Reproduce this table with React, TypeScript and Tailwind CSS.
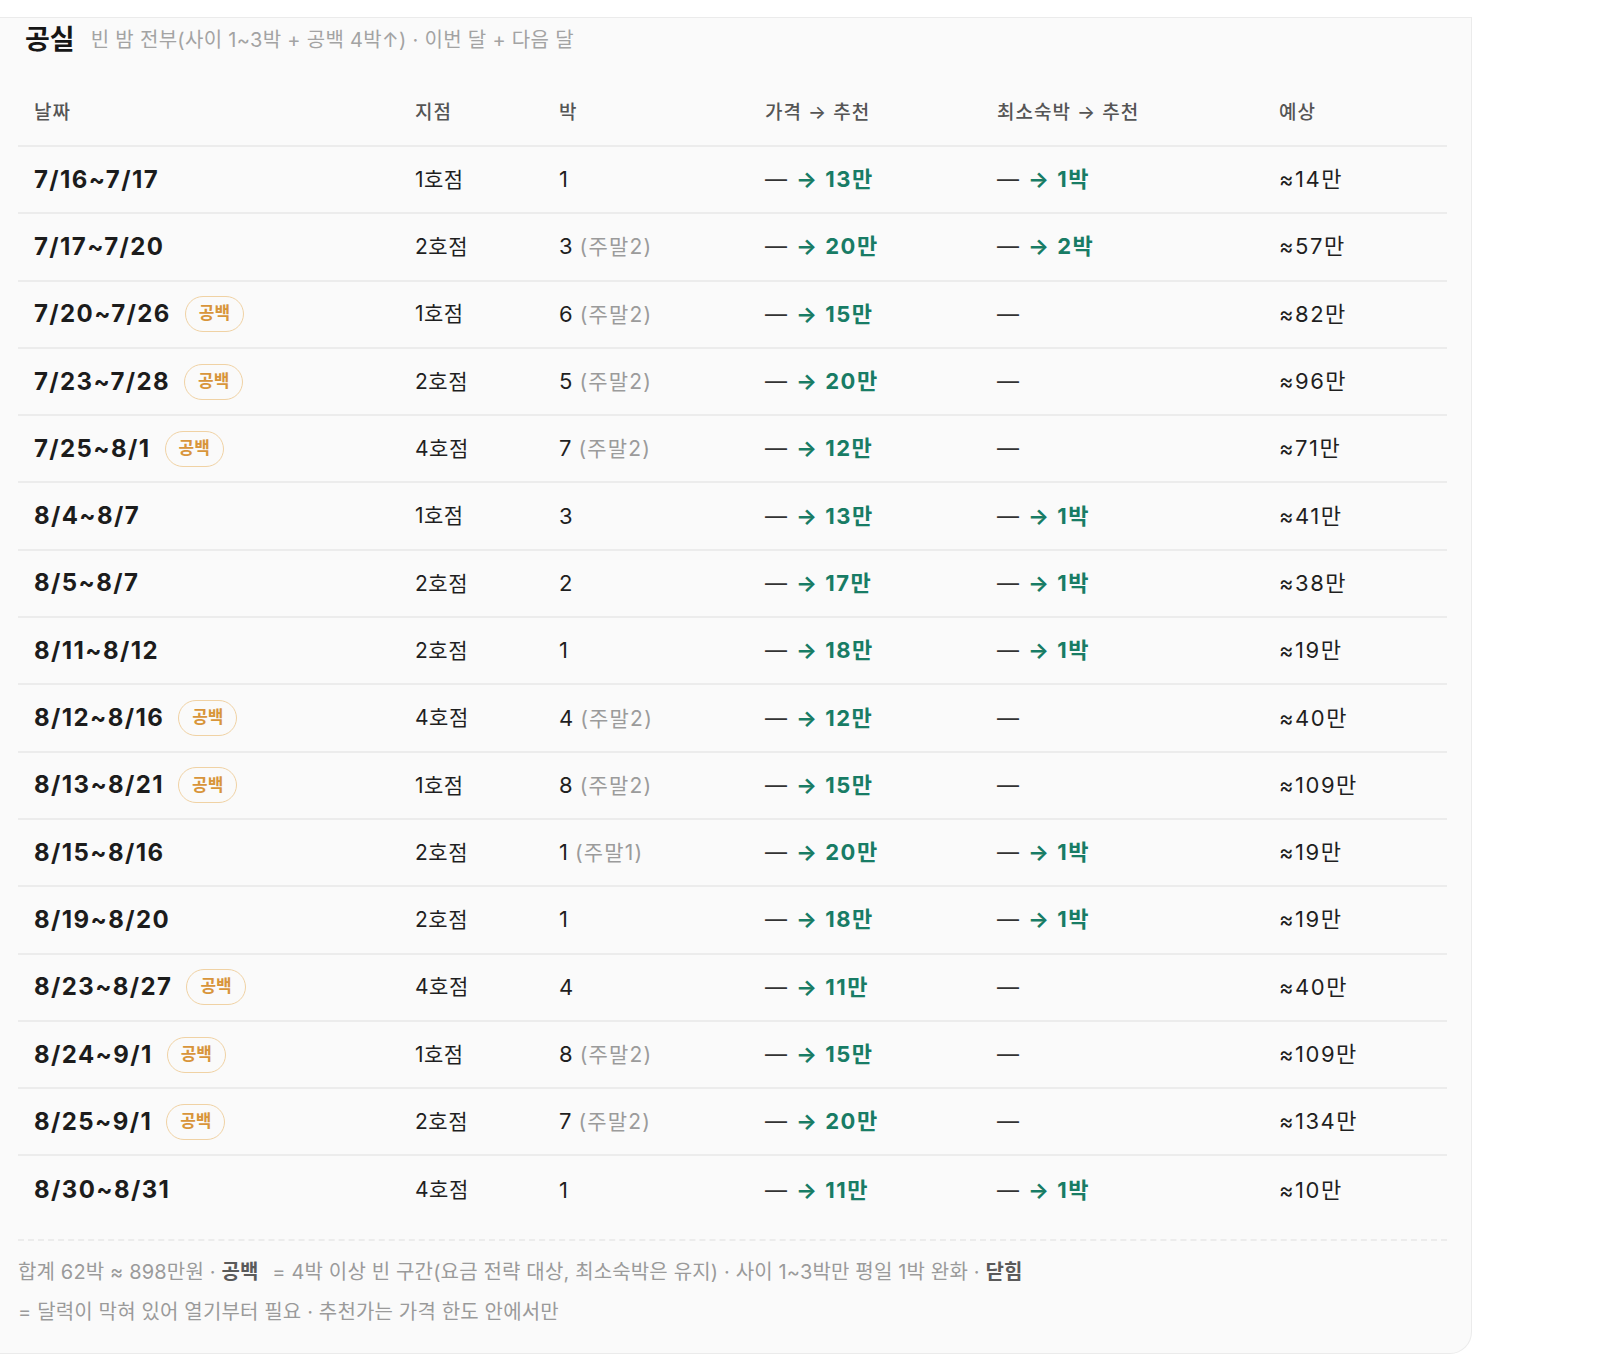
import React from 'react';

type Row = {
  date: string;
  gap?: boolean;
  branch: string;
  nights: string;
  weekend?: string;
  price: string;
  minStay?: string;
  est: string;
};

const rows: Row[] = [
  { date: '7/16~7/17', branch: '1호점', nights: '1', price: '13만', minStay: '1박', est: '≈14만' },
  { date: '7/17~7/20', branch: '2호점', nights: '3', weekend: '(주말2)', price: '20만', minStay: '2박', est: '≈57만' },
  { date: '7/20~7/26', gap: true, branch: '1호점', nights: '6', weekend: '(주말2)', price: '15만', est: '≈82만' },
  { date: '7/23~7/28', gap: true, branch: '2호점', nights: '5', weekend: '(주말2)', price: '20만', est: '≈96만' },
  { date: '7/25~8/1', gap: true, branch: '4호점', nights: '7', weekend: '(주말2)', price: '12만', est: '≈71만' },
  { date: '8/4~8/7', branch: '1호점', nights: '3', price: '13만', minStay: '1박', est: '≈41만' },
  { date: '8/5~8/7', branch: '2호점', nights: '2', price: '17만', minStay: '1박', est: '≈38만' },
  { date: '8/11~8/12', branch: '2호점', nights: '1', price: '18만', minStay: '1박', est: '≈19만' },
  { date: '8/12~8/16', gap: true, branch: '4호점', nights: '4', weekend: '(주말2)', price: '12만', est: '≈40만' },
  { date: '8/13~8/21', gap: true, branch: '1호점', nights: '8', weekend: '(주말2)', price: '15만', est: '≈109만' },
  { date: '8/15~8/16', branch: '2호점', nights: '1', weekend: '(주말1)', price: '20만', minStay: '1박', est: '≈19만' },
  { date: '8/19~8/20', branch: '2호점', nights: '1', price: '18만', minStay: '1박', est: '≈19만' },
  { date: '8/23~8/27', gap: true, branch: '4호점', nights: '4', price: '11만', est: '≈40만' },
  { date: '8/24~9/1', gap: true, branch: '1호점', nights: '8', weekend: '(주말2)', price: '15만', est: '≈109만' },
  { date: '8/25~9/1', gap: true, branch: '2호점', nights: '7', weekend: '(주말2)', price: '20만', est: '≈134만' },
  { date: '8/30~8/31', branch: '4호점', nights: '1', price: '11만', minStay: '1박', est: '≈10만' },
];

const cols = 'grid grid-cols-[381px_144px_206px_232px_282px_1fr] items-center';

function Suggest({ value }: { value: string }) {
  return (
    <span className="flex items-center">
      <span className="text-[22px] text-[#333]">—</span>
      <span className="ml-[9px] text-[22px] font-bold tracking-[1.5px] text-[#187c65]">→ {value}</span>
    </span>
  );
}

export default function App() {
  return (
    <div className="min-h-screen bg-white pt-[17px] font-[Inter,'Noto_Sans_CJK_KR',sans-serif] text-[#1f1f1f]">
      <div className="w-[1472px] rounded-br-[22px] border-t border-r border-b border-[#ebebeb] bg-[#fafafa] pl-[18px] pr-[24px] pb-[21px]">
        <div className="flex h-[44px] items-center gap-[16px] pl-[7px]">
          <span className="text-[27px] font-bold text-[#161616]">공실</span>
          <span className="text-[20px] tracking-[0.3px] text-[#a3a3a3]">빈 밤 전부(사이 1~3박 + 공백 4박↑) · 이번 달 + 다음 달</span>
        </div>

        <div className="mt-[19px]">
          <div className={`${cols} h-[66px] border-b-2 border-[#ececec] text-[19px] font-medium tracking-[1px] text-[#555]`}>
            <div className="px-4">날짜</div>
            <div className="px-4">지점</div>
            <div className="px-4">박</div>
            <div className="px-4">가격 → 추천</div>
            <div className="px-4">최소숙박 → 추천</div>
            <div className="px-4">예상</div>
          </div>

          {rows.map((r, i) => (
            <div
              key={r.date}
              className={`${cols} h-[67.3px] text-[21px] ${i < rows.length - 1 ? 'border-b-2 border-[#ececec]' : ''}`}
            >
              <div className="flex items-center gap-[14px] px-4">
                <span className="text-[24px] font-bold tracking-[1.4px] text-[#1c1c1c]">{r.date}</span>
                {r.gap && (
                  <span className="flex h-[36px] items-center rounded-full border-[1.5px] border-[#f0d2a4] px-[13px] text-[17px] font-semibold text-[#d8953a]">
                    공백
                  </span>
                )}
              </div>
              <div className="px-4 tracking-[0.5px]">{r.branch}</div>
              <div className="px-4">
                <span className="text-[22px]">{r.nights}</span>
                {r.weekend && <span className="ml-[7px] tracking-[1.2px] text-[#9b9b9b]">{r.weekend}</span>}
              </div>
              <div className="px-4">
                <Suggest value={r.price} />
              </div>
              <div className="px-4">
                {r.minStay ? <Suggest value={r.minStay} /> : <span className="text-[22px] text-[#333]">—</span>}
              </div>
              <div className="px-4 text-[22px] tracking-[1.5px]">{r.est}</div>
            </div>
          ))}
        </div>

        <div className="mt-[15px] border-t-2 border-dashed border-[#ececec] pt-[11px] text-[20px] leading-[40px] tracking-[0.15px] text-[#9a9a9a]">
          합계 62박 ≈ 898만원 · <b className="mr-[8px] font-semibold text-[#5a5a5a]">공백</b> = 4박 이상 빈 구간(요금 전략 대상, 최소숙박은 유지) · 사이 1~3박만 평일 1박 완화 · <b className="mr-[8px] font-semibold text-[#5a5a5a]">닫힘</b>
          <br />= 달력이 막혀 있어 열기부터 필요 · 추천가는 가격 한도 안에서만
        </div>
      </div>
    </div>
  );
}
